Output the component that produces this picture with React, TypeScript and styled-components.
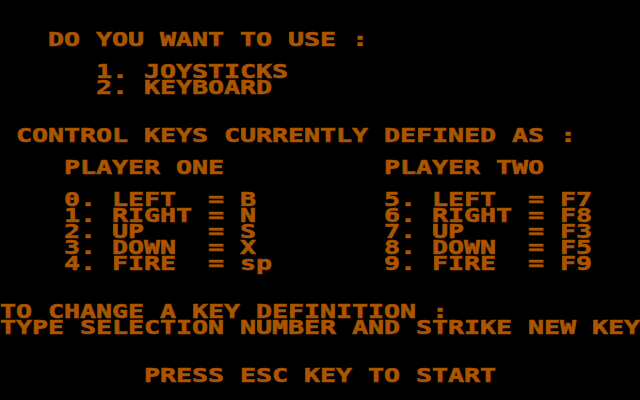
import React from 'react'
import styled, { createGlobalStyle } from 'styled-components'

const CELL = 16
const FONT_SIZE = 19
const SCALE = CELL / (0.602 * FONT_SIZE)

const GlobalStyle = createGlobalStyle`
  html, body {
    margin: 0;
    padding: 0;
    background: #000;
  }
`

type LineDef = { row: number; col: number; text: string }

const lines: LineDef[] = [
  { row: 2, col: 3, text: 'DO YOU WANT TO USE :' },
  { row: 4, col: 6, text: '1. JOYSTICKS' },
  { row: 5, col: 6, text: '2. KEYBOARD' },
  { row: 8, col: 1, text: 'CONTROL KEYS CURRENTLY DEFINED AS :' },
  { row: 10, col: 4, text: 'PLAYER ONE' },
  { row: 10, col: 24, text: 'PLAYER TWO' },
  { row: 12, col: 4, text: '0. LEFT  = B' },
  { row: 13, col: 4, text: '1. RIGHT = N' },
  { row: 14, col: 4, text: '2. UP    = S' },
  { row: 15, col: 4, text: '3. DOWN  = X' },
  { row: 16, col: 4, text: '4. FIRE  = sp' },
  { row: 12, col: 24, text: '5. LEFT  = F7' },
  { row: 13, col: 24, text: '6. RIGHT = F8' },
  { row: 14, col: 24, text: '7. UP    = F3' },
  { row: 15, col: 24, text: '8. DOWN  = F5' },
  { row: 16, col: 24, text: '9. FIRE  = F9' },
  { row: 19, col: 0, text: 'TO CHANGE A KEY DEFINITION :' },
  { row: 20, col: 0, text: 'TYPE SELECTION NUMBER AND STRIKE NEW KEY' },
  { row: 23, col: 9, text: 'PRESS ESC KEY TO START' },
]

function App(): JSX.Element {
  return (
    <>
      <GlobalStyle />
      <Screen>
        {lines.map((l, i) => (
          <Line key={i} $row={l.row} $col={l.col}>
            <Chars>{l.text}</Chars>
          </Line>
        ))}
      </Screen>
    </>
  )
}

const Screen = styled.div`
  width: 640px;
  height: 400px;
  background: #000;
  overflow: hidden;
  display: grid;
  grid-template-rows: repeat(25, ${CELL}px);
  grid-template-columns: 640px;
`

const Line = styled.div<{ $row: number; $col: number }>`
  grid-row: ${(p) => p.$row + 1};
  grid-column: 1;
  padding-left: ${(p) => p.$col * CELL}px;
  height: ${CELL}px;
  overflow: visible;
`

const Chars = styled.span`
  display: inline-block;
  white-space: pre;
  font-family: 'DejaVu Sans Mono', 'Liberation Mono', monospace;
  font-weight: bold;
  font-size: ${FONT_SIZE}px;
  line-height: ${CELL}px;
  color: #aa5500;
  -webkit-text-stroke: 0.6px #aa5500;
  transform: scaleX(${SCALE});
  transform-origin: 0 0;
  position: relative;
  top: -1px;
`

export default App
